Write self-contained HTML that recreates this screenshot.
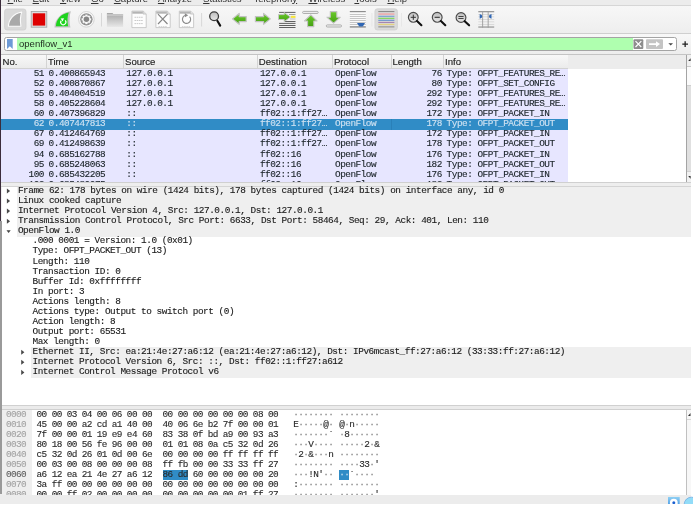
<!DOCTYPE html>
<html><head><meta charset="utf-8"><style>
*{margin:0;padding:0;box-sizing:border-box}
html,body{width:693px;height:506px;overflow:hidden;background:#efefef;position:relative}
body{-webkit-font-smoothing:antialiased}
.wrap{position:absolute;left:0;top:0;width:693px;height:506px;will-change:transform}
.a{position:absolute}
.m{font-family:"Liberation Mono", monospace;white-space:pre;color:#1a1a1a;-webkit-text-stroke:0.12px currentColor}
.s{font-family:"Liberation Sans", sans-serif;white-space:pre;color:#1a1a1a}
</style></head><body>
<div class="wrap"><div class="a" style="left:0;top:0;width:693px;height:5px;background:#ececec"></div><div class="a" style="left:0;top:0;width:693px;height:5px;overflow:hidden"><div class="a s" style="left:7.4px;top:-7.36px;font-size:9.6px;line-height:12px;color:#333"><span style="text-decoration:underline;text-decoration-thickness:1px;text-underline-offset:1.2px">F</span>ile</div><div class="a s" style="left:32.6px;top:-7.36px;font-size:9.6px;line-height:12px;color:#333"><span style="text-decoration:underline;text-decoration-thickness:1px;text-underline-offset:1.2px">E</span>dit</div><div class="a s" style="left:60.0px;top:-7.36px;font-size:9.6px;line-height:12px;color:#333"><span style="text-decoration:underline;text-decoration-thickness:1px;text-underline-offset:1.2px">V</span>iew</div><div class="a s" style="left:91.0px;top:-7.36px;font-size:9.6px;line-height:12px;color:#333"><span style="text-decoration:underline;text-decoration-thickness:1px;text-underline-offset:1.2px">G</span>o</div><div class="a s" style="left:113.9px;top:-7.36px;font-size:9.6px;line-height:12px;color:#333"><span style="text-decoration:underline;text-decoration-thickness:1px;text-underline-offset:1.2px">C</span>apture</div><div class="a s" style="left:157.9px;top:-7.36px;font-size:9.6px;line-height:12px;color:#333"><span style="text-decoration:underline;text-decoration-thickness:1px;text-underline-offset:1.2px">A</span>nalyze</div><div class="a s" style="left:203.1px;top:-7.36px;font-size:9.6px;line-height:12px;color:#333"><span style="text-decoration:underline;text-decoration-thickness:1px;text-underline-offset:1.2px">S</span>tatistics</div><div class="a s" style="left:253.4px;top:-7.36px;font-size:9.6px;line-height:12px;color:#333">Telephon<span style="text-decoration:underline;text-decoration-thickness:1px;text-underline-offset:1.2px">y</span></div><div class="a s" style="left:308.4px;top:-7.36px;font-size:9.6px;line-height:12px;color:#333"><span style="text-decoration:underline;text-decoration-thickness:1px;text-underline-offset:1.2px">W</span>ireless</div><div class="a s" style="left:354.4px;top:-7.36px;font-size:9.6px;line-height:12px;color:#333"><span style="text-decoration:underline;text-decoration-thickness:1px;text-underline-offset:1.2px">T</span>ools</div><div class="a s" style="left:387.4px;top:-7.36px;font-size:9.6px;line-height:12px;color:#333"><span style="text-decoration:underline;text-decoration-thickness:1px;text-underline-offset:1.2px">H</span>elp</div></div><div class="a" style="left:0;top:4.9px;width:693px;height:1px;background:#d6d6d6"></div><div class="a" style="left:0;top:6px;width:693px;height:27px;background:linear-gradient(#f7f7f7,#eeeeee)"></div><div class="a" style="left:0;top:33px;width:693px;height:1px;background:#cfcfcf"></div><svg class="a" style="left:0;top:0" width="693" height="34" viewBox="0 0 693 34">
<defs>
<linearGradient id="fold" x1="0" y1="0" x2="0" y2="1"><stop offset="0" stop-color="#a6a6a6"/><stop offset="1" stop-color="#e8e8e8"/></linearGradient>
<linearGradient id="grn" x1="0" y1="0" x2="0" y2="1"><stop offset="0" stop-color="#6ccb2c"/><stop offset="1" stop-color="#44a012"/></linearGradient>
<linearGradient id="mag" x1="0" y1="0" x2="0" y2="1"><stop offset="0" stop-color="#bdbdbd"/><stop offset="1" stop-color="#e8e8e8"/></linearGradient>
</defs>
<!-- start capture (pressed) -->
<rect x="4.6" y="9" width="21.4" height="21" rx="2.5" fill="#d9d9d9" stroke="#cecece" stroke-width="0.8"/>
<path d="M8.4 26.2 C8.7 19.5 13.5 13.2 21.7 12.1 C20.5 15.5 20.1 21 20.9 26.2 Z" fill="#a9a9a9" stroke="#fbfbfb" stroke-width="1.1" stroke-linejoin="round"/>
<!-- stop -->
<rect x="31.2" y="11.4" width="15.6" height="15.8" fill="#dedede" stroke="#a2a2a2" stroke-width="0.8"/>
<rect x="32.8" y="13.3" width="12.4" height="12.3" fill="#de0000"/>
<!-- restart -->
<path d="M54.5 27.4 C54.8 19.5 60.5 12.5 70.9 11.2 C69.3 15.5 69.1 22 70.4 27.4 Z" fill="#c2c2c2"/>
<path d="M55.9 26.2 C56.2 19.5 61 13.8 68.7 12.6 C67.4 16 67.1 21.5 68.1 26.2 Z" fill="#1ed41e"/>
<path d="M61.2 20.6 A2.6 2.6 0 1 0 65.2 20.4" fill="none" stroke="#fff" stroke-width="1.15"/>
<path d="M60.6 18.4 L64 18.2 L62.6 21.4 Z" fill="#fff"/>
<!-- options gear -->
<circle cx="86.4" cy="19.35" r="7.8" fill="#fafafa" stroke="#cfcfcf" stroke-width="0.9"/>
<circle cx="86.4" cy="19.35" r="6.2" fill="#8e8e8e"/>
<path d="M85.34 15.80 L85.46 14.69 L87.34 14.69 L87.46 15.80 L88.16 16.09 L89.02 15.39 L90.36 16.73 L89.66 17.59 L89.95 18.29 L91.06 18.41 L91.06 20.29 L89.95 20.41 L89.66 21.11 L90.36 21.97 L89.02 23.31 L88.16 22.61 L87.46 22.90 L87.34 24.01 L85.46 24.01 L85.34 22.90 L84.64 22.61 L83.78 23.31 L82.44 21.97 L83.14 21.11 L82.85 20.41 L81.74 20.29 L81.74 18.41 L82.85 18.29 L83.14 17.59 L82.44 16.73 L83.78 15.39 L84.64 16.09Z" fill="#f8f8f8" stroke="#f8f8f8" stroke-width="0.3" stroke-linejoin="round"/>
<circle cx="86.4" cy="19.35" r="2.75" fill="#868686"/>
<!-- separator -->
<rect x="101" y="13" width="0.9" height="13.5" fill="#d4d4d4"/>
<!-- open folder -->
<path d="M106.9 13 H112.5 L113.3 14.1 H123.1 V27.1 H106.9 Z" fill="url(#fold)"/>
<rect x="106.9" y="14.6" width="16.2" height="0.8" fill="#e6e6e6"/>
<!-- document -->
<path d="M131.9 11.1 H143.3 L146.20000000000002 14 V27.6 H131.9 Z" fill="#fdfdfd" stroke="#b8b8b8" stroke-width="0.7"/>
<rect x="132.3" y="11.5" width="10.5" height="2.2" fill="#b4b4b4"/>
<path d="M143.10000000000002 11.3 V14.1 H146.10000000000002" fill="#e0e0e0" stroke="#b0b0b0" stroke-width="0.6"/>
<rect x="134.5" y="16.8" width="1.6" height="0.9" fill="#c4c4c4"/><rect x="136.7" y="16.8" width="1.6" height="0.9" fill="#c4c4c4"/><rect x="138.9" y="16.8" width="1.6" height="0.9" fill="#c4c4c4"/><rect x="141.1" y="16.8" width="1.6" height="0.9" fill="#c4c4c4"/><rect x="134.5" y="20.0" width="1.6" height="0.9" fill="#c4c4c4"/><rect x="136.7" y="20.0" width="1.6" height="0.9" fill="#c4c4c4"/><rect x="138.9" y="20.0" width="1.6" height="0.9" fill="#c4c4c4"/><rect x="141.1" y="20.0" width="1.6" height="0.9" fill="#c4c4c4"/><rect x="134.5" y="23.2" width="1.6" height="0.9" fill="#c4c4c4"/><rect x="136.7" y="23.2" width="1.6" height="0.9" fill="#c4c4c4"/><rect x="138.9" y="23.2" width="1.6" height="0.9" fill="#c4c4c4"/><rect x="141.1" y="23.2" width="1.6" height="0.9" fill="#c4c4c4"/>
<!-- close file -->
<path d="M155.9 11.1 H167.3 L170.20000000000002 14 V27.6 H155.9 Z" fill="#fdfdfd" stroke="#b8b8b8" stroke-width="0.7"/>
<rect x="156.3" y="11.5" width="10.5" height="2.2" fill="#b4b4b4"/>
<path d="M167.10000000000002 11.3 V14.1 H170.10000000000002" fill="#e0e0e0" stroke="#b0b0b0" stroke-width="0.6"/>
<rect x="158.5" y="26.0" width="1.6" height="0.7" fill="#c8c8c8"/><rect x="160.7" y="26.0" width="1.6" height="0.7" fill="#c8c8c8"/><rect x="162.9" y="26.0" width="1.6" height="0.7" fill="#c8c8c8"/><rect x="165.1" y="26.0" width="1.6" height="0.7" fill="#c8c8c8"/><path d="M158 14.1 L167.5 24 M167.5 14.1 L158 24" stroke="#858585" stroke-width="1.15"/>
<!-- reload -->
<path d="M179.3 11.1 H190.70000000000002 L193.60000000000002 14 V27.6 H179.3 Z" fill="#fdfdfd" stroke="#b8b8b8" stroke-width="0.7"/>
<rect x="179.70000000000002" y="11.5" width="10.5" height="2.2" fill="#b4b4b4"/>
<path d="M190.50000000000003 11.3 V14.1 H193.50000000000003" fill="#e0e0e0" stroke="#b0b0b0" stroke-width="0.6"/>
<rect x="181.9" y="26" width="1.6" height="0.7" fill="#c8c8c8"/><rect x="184.1" y="26" width="1.6" height="0.7" fill="#c8c8c8"/><rect x="186.3" y="26" width="1.6" height="0.7" fill="#c8c8c8"/><rect x="188.5" y="26" width="1.6" height="0.7" fill="#c8c8c8"/><path d="M189.6 16.6 A4.1 4.1 0 1 1 185.8 15.3" fill="none" stroke="#8a8a8a" stroke-width="1.15"/><path d="M184.8 13.2 L188.2 15.3 L185 17.3 Z" fill="#8a8a8a"/>
<!-- separator -->
<rect x="201.2" y="13" width="0.9" height="13.5" fill="#d4d4d4"/>
<!-- find -->
<circle cx="214.1" cy="16.3" r="4.4" fill="url(#mag)" stroke="#3a3a3a" stroke-width="1.3"/>
<path d="M217.3 20.8 L220.2 25.6" stroke="#111" stroke-width="2.1" stroke-linecap="round"/>
<!-- back -->
<path d="M232.5 18.9 L239.2 13.5 V16.6 H246.2 V21.6 H239.2 V24.3 Z" fill="url(#grn)" stroke="#c2c2c2" stroke-width="1.2" stroke-linejoin="round"/>
<!-- forward -->
<path d="M270.3 18.9 L263.6 13.5 V16.6 H255.4 V21.6 H263.6 V24.3 Z" fill="url(#grn)" stroke="#c2c2c2" stroke-width="1.2" stroke-linejoin="round"/>
<!-- go to packet -->
<g fill="#505050">
<rect x="279.1" y="11.9" width="16.4" height="0.9"/>
<rect x="285" y="21" width="10.5" height="0.9"/>
<rect x="279.1" y="22.9" width="16.4" height="0.9"/>
<rect x="279.1" y="25" width="16.4" height="0.9"/>
<rect x="279.1" y="27.1" width="16.4" height="0.9"/>
</g>
<rect x="289" y="14" width="6.5" height="0.8" fill="#8a8a8a"/>
<rect x="290" y="18.6" width="5.5" height="0.8" fill="#b0b0b0"/>
<path d="M278.5 14.6 H284.2 V12.5 L290.4 17 L284.2 21.7 V19.5 H278.5 Z" fill="url(#grn)" stroke="#c4c4c4" stroke-width="1" stroke-linejoin="round"/>
<rect x="290.9" y="15.8" width="4.6" height="2.1" fill="#f6e43a"/>
<!-- first packet -->
<rect x="302.6" y="11.4" width="15.6" height="2.1" rx="1" fill="#ededed" stroke="#a0a0a0" stroke-width="0.8"/>
<path d="M310.8 14.8 L317 21 H313.8 V26.6 H307.6 V21 H304.5 Z" fill="url(#grn)" stroke="#c2c2c2" stroke-width="1.1" stroke-linejoin="round"/>
<!-- last packet -->
<path d="M330.3 11.6 H336.8 V17.2 H340.3 L333.55 23.2 L326.9 17.2 H330.3 Z" fill="url(#grn)" stroke="#c2c2c2" stroke-width="1.1" stroke-linejoin="round"/>
<rect x="326.3" y="24.9" width="15.2" height="2.1" rx="1" fill="#ededed" stroke="#a0a0a0" stroke-width="0.8"/>
<!-- autoscroll -->
<rect x="349.8" y="12" width="16" height="14.3" fill="#fafafa"/>
<rect x="349.8" y="11" width="16" height="1.2" fill="#8e8e8e"/>
<g fill="#c6c6c6"><rect x="349.8" y="14" width="16" height="1"/><rect x="349.8" y="16" width="16" height="1"/><rect x="349.8" y="18" width="16" height="1"/><rect x="349.8" y="20" width="16" height="1"/><rect x="349.8" y="22" width="16" height="1"/><rect x="349.8" y="24" width="16" height="1"/></g>
<rect x="349.8" y="26.2" width="16" height="1.4" fill="#8e8e8e"/>
<path d="M357 22.9 H365 L363 26.2 Q361 27 359 26.2 Z" fill="#2f66b4"/>
<rect x="371.6" y="13" width="0.7" height="13.5" fill="#e2e2e2"/>
<!-- colorize pressed -->
<rect x="374.9" y="8.8" width="22.5" height="21.2" rx="2.5" fill="#dadada" stroke="#cdcdcd" stroke-width="0.7"/>
<rect x="378.3" y="11" width="16.1" height="1.1" fill="#8c8c8c"/>
<rect x="378.3" y="13.4" width="16.1" height="1.3" fill="#f2a2a2"/>
<rect x="378.3" y="15.8" width="16.1" height="0.9" fill="#5f91d2"/>
<rect x="378.3" y="17.8" width="16.1" height="0.9" fill="#62d433"/>
<rect x="378.3" y="19.8" width="16.1" height="0.9" fill="#4d82c8"/>
<rect x="378.3" y="21.9" width="16.1" height="0.9" fill="#9a70a8"/>
<rect x="378.3" y="23.8" width="16.1" height="1.3" fill="#e2d083"/>
<rect x="378.3" y="26.2" width="16.1" height="1.3" fill="#9c9c9c"/>
<rect x="401" y="13" width="0.7" height="13.5" fill="#e2e2e2"/>
<!-- zoom in -->
<circle cx="413.3" cy="17.3" r="4.9" fill="url(#mag)" stroke="#4a4a4a" stroke-width="1.15"/>
<path d="M410.7 17.3 H415.9 M413.3 14.7 V19.9" stroke="#333" stroke-width="1"/>
<path d="M417 21 L421.4 25.2" stroke="#111" stroke-width="2.1" stroke-linecap="round"/>
<!-- zoom out -->
<circle cx="437.2" cy="17.3" r="4.9" fill="url(#mag)" stroke="#4a4a4a" stroke-width="1.15"/>
<path d="M434.6 17.3 H439.8" stroke="#333" stroke-width="1.1"/>
<path d="M440.9 21 L445.3 25.2" stroke="#111" stroke-width="2.1" stroke-linecap="round"/>
<!-- normal size -->
<circle cx="461" cy="17.5" r="4.9" fill="url(#mag)" stroke="#4a4a4a" stroke-width="1.15"/>
<path d="M458.4 16.5 H463.6 M458.4 18.5 H463.6" stroke="#333" stroke-width="0.9"/>
<path d="M464.7 21.2 L469.1 25.3" stroke="#111" stroke-width="2.1" stroke-linecap="round"/>
<!-- resize columns -->
<rect x="478.3" y="11" width="15.9" height="1.3" fill="#9a9a9a"/>
<g fill="#d0d0d0"><rect x="478.3" y="14" width="15.9" height="0.7"/><rect x="478.3" y="16.5" width="15.9" height="0.7"/><rect x="478.3" y="19" width="15.9" height="0.7"/><rect x="478.3" y="21.5" width="15.9" height="0.7"/><rect x="478.3" y="24" width="15.9" height="0.7"/></g>
<rect x="478.3" y="26.4" width="15.9" height="1.3" fill="#9a9a9a"/>
<rect x="482.2" y="11" width="0.9" height="16.7" fill="#9c9c9c"/>
<rect x="487.7" y="11" width="0.9" height="16.7" fill="#9c9c9c"/>
<path d="M479.7 14.1 Q482.6 15 482.2 16.4 Q482.6 17.8 479.7 18.7 Z" fill="#2f66b4"/>
<path d="M491.5 14.1 Q488.6 15 489 16.4 Q488.6 17.8 491.5 18.7 Z" fill="#2f66b4"/>
</svg>
<div class="a" style="left:0;top:34px;width:693px;height:20px;background:linear-gradient(#f8f8f8,#ededed)"></div><div class="a" style="left:4px;top:37px;width:673px;height:14px;border:1px solid #a4a4a4;border-radius:2.5px;background:#fff"></div><div class="a" style="left:17.3px;top:38px;width:616px;height:12px;background:#afffaf"></div><svg class="a" style="left:0;top:34px" width="693" height="20" viewBox="0 34 693 20"><path d="M7 39 H12.7 V49 L9.85 46.2 L7 49 Z" fill="#6d9ad6"/><rect x="633.5" y="39.2" width="9.8" height="9.8" rx="1" fill="#8d8d8d"/><path d="M635.5 41.2 L641.3 47 M641.3 41.2 L635.5 47" stroke="#fff" stroke-width="1.2"/><rect x="646" y="39.2" width="17" height="9.8" rx="1" fill="#c4c4c4"/><path d="M649 43.2 H656 V41.2 L660 44.1 L656 47 V45 H649 Z" fill="#fff"/><path d="M668.4 43.2 H673 L670.7 45.6 Z" fill="#444"/><path d="M682.3 44.1 H688 M685.15 41.3 V46.9" stroke="#222" stroke-width="1.3"/></svg><div class="a s" style="left:19px;top:38px;font-size:9.54px;line-height:12px;color:#1e2a1e">openflow_v1</div><div class="a" style="left:1px;top:54px;width:686px;height:128.5px;background:#fff"></div><div class="a" style="left:1px;top:54.2px;width:686px;height:14.5px;background:#ececec;border-top:1px solid #c4c4c4"></div><div class="a" style="left:1px;top:55.2px;width:567.2px;height:13.5px;background:linear-gradient(#f8f8f8,#ebebeb);border-bottom:1px solid #d2d2d2"></div><div class="a s" style="left:2.5px;top:55.6px;font-size:9.6px;line-height:11px;color:#222;-webkit-text-stroke:0.15px #222">No.</div><div class="a s" style="left:47.9px;top:55.6px;font-size:9.6px;line-height:11px;color:#222;-webkit-text-stroke:0.15px #222">Time</div><div class="a" style="left:45.9px;top:55px;width:1px;height:13px;background:#d3d3d3"></div><div class="a s" style="left:125.0px;top:55.6px;font-size:9.6px;line-height:11px;color:#222;-webkit-text-stroke:0.15px #222">Source</div><div class="a" style="left:123.0px;top:55px;width:1px;height:13px;background:#d3d3d3"></div><div class="a s" style="left:258.8px;top:55.6px;font-size:9.6px;line-height:11px;color:#222;-webkit-text-stroke:0.15px #222">Destination</div><div class="a" style="left:256.8px;top:55px;width:1px;height:13px;background:#d3d3d3"></div><div class="a s" style="left:333.9px;top:55.6px;font-size:9.6px;line-height:11px;color:#222;-webkit-text-stroke:0.15px #222">Protocol</div><div class="a" style="left:331.9px;top:55px;width:1px;height:13px;background:#d3d3d3"></div><div class="a s" style="left:392.5px;top:55.6px;font-size:9.6px;line-height:11px;color:#222;-webkit-text-stroke:0.15px #222">Length</div><div class="a" style="left:390.5px;top:55px;width:1px;height:13px;background:#d3d3d3"></div><div class="a s" style="left:445.0px;top:55.6px;font-size:9.6px;line-height:11px;color:#222;-webkit-text-stroke:0.15px #222">Info</div><div class="a" style="left:443.0px;top:55px;width:1px;height:13px;background:#d3d3d3"></div><div class="a" style="left:1px;top:69px;width:686px;height:113.3px;overflow:hidden"><div class="a" style="left:0;top:0;width:567.2px;height:120px;background:#e7e6ff"></div><div class="a m" style="left:-57.08px;width:100px;text-align:right;top:0.20px;font-size:9.4px;letter-spacing:-0.481px;line-height:10.04px;color:#1a2328">51</div><div class="a m" style="left:47.6px;top:0.20px;font-size:9.4px;letter-spacing:-0.481px;line-height:10.04px;color:#1a2328">0.400865943</div><div class="a m" style="left:125.3px;top:0.20px;font-size:9.4px;letter-spacing:-0.481px;line-height:10.04px;color:#1a2328">127.0.0.1</div><div class="a m" style="left:258.9px;top:0.20px;font-size:9.4px;letter-spacing:-0.481px;line-height:10.04px;color:#1a2328">127.0.0.1</div><div class="a m" style="left:334px;top:0.20px;font-size:9.4px;letter-spacing:-0.481px;line-height:10.04px;color:#1a2328">OpenFlow</div><div class="a m" style="left:340.92px;width:100px;text-align:right;top:0.20px;font-size:9.4px;letter-spacing:-0.481px;line-height:10.04px;color:#1a2328">76</div><div class="a m" style="left:445.6px;top:0.20px;font-size:9.4px;letter-spacing:-0.481px;line-height:10.04px;color:#1a2328">Type: OFPT_FEATURES_RE…</div><div class="a m" style="left:-57.08px;width:100px;text-align:right;top:10.24px;font-size:9.4px;letter-spacing:-0.481px;line-height:10.04px;color:#1a2328">52</div><div class="a m" style="left:47.6px;top:10.24px;font-size:9.4px;letter-spacing:-0.481px;line-height:10.04px;color:#1a2328">0.400870867</div><div class="a m" style="left:125.3px;top:10.24px;font-size:9.4px;letter-spacing:-0.481px;line-height:10.04px;color:#1a2328">127.0.0.1</div><div class="a m" style="left:258.9px;top:10.24px;font-size:9.4px;letter-spacing:-0.481px;line-height:10.04px;color:#1a2328">127.0.0.1</div><div class="a m" style="left:334px;top:10.24px;font-size:9.4px;letter-spacing:-0.481px;line-height:10.04px;color:#1a2328">OpenFlow</div><div class="a m" style="left:340.92px;width:100px;text-align:right;top:10.24px;font-size:9.4px;letter-spacing:-0.481px;line-height:10.04px;color:#1a2328">80</div><div class="a m" style="left:445.6px;top:10.24px;font-size:9.4px;letter-spacing:-0.481px;line-height:10.04px;color:#1a2328">Type: OFPT_SET_CONFIG</div><div class="a m" style="left:-57.08px;width:100px;text-align:right;top:20.28px;font-size:9.4px;letter-spacing:-0.481px;line-height:10.04px;color:#1a2328">55</div><div class="a m" style="left:47.6px;top:20.28px;font-size:9.4px;letter-spacing:-0.481px;line-height:10.04px;color:#1a2328">0.404004519</div><div class="a m" style="left:125.3px;top:20.28px;font-size:9.4px;letter-spacing:-0.481px;line-height:10.04px;color:#1a2328">127.0.0.1</div><div class="a m" style="left:258.9px;top:20.28px;font-size:9.4px;letter-spacing:-0.481px;line-height:10.04px;color:#1a2328">127.0.0.1</div><div class="a m" style="left:334px;top:20.28px;font-size:9.4px;letter-spacing:-0.481px;line-height:10.04px;color:#1a2328">OpenFlow</div><div class="a m" style="left:340.92px;width:100px;text-align:right;top:20.28px;font-size:9.4px;letter-spacing:-0.481px;line-height:10.04px;color:#1a2328">292</div><div class="a m" style="left:445.6px;top:20.28px;font-size:9.4px;letter-spacing:-0.481px;line-height:10.04px;color:#1a2328">Type: OFPT_FEATURES_RE…</div><div class="a m" style="left:-57.08px;width:100px;text-align:right;top:30.32px;font-size:9.4px;letter-spacing:-0.481px;line-height:10.04px;color:#1a2328">58</div><div class="a m" style="left:47.6px;top:30.32px;font-size:9.4px;letter-spacing:-0.481px;line-height:10.04px;color:#1a2328">0.405228604</div><div class="a m" style="left:125.3px;top:30.32px;font-size:9.4px;letter-spacing:-0.481px;line-height:10.04px;color:#1a2328">127.0.0.1</div><div class="a m" style="left:258.9px;top:30.32px;font-size:9.4px;letter-spacing:-0.481px;line-height:10.04px;color:#1a2328">127.0.0.1</div><div class="a m" style="left:334px;top:30.32px;font-size:9.4px;letter-spacing:-0.481px;line-height:10.04px;color:#1a2328">OpenFlow</div><div class="a m" style="left:340.92px;width:100px;text-align:right;top:30.32px;font-size:9.4px;letter-spacing:-0.481px;line-height:10.04px;color:#1a2328">292</div><div class="a m" style="left:445.6px;top:30.32px;font-size:9.4px;letter-spacing:-0.481px;line-height:10.04px;color:#1a2328">Type: OFPT_FEATURES_RE…</div><div class="a m" style="left:-57.08px;width:100px;text-align:right;top:40.36px;font-size:9.4px;letter-spacing:-0.481px;line-height:10.04px;color:#1a2328">60</div><div class="a m" style="left:47.6px;top:40.36px;font-size:9.4px;letter-spacing:-0.481px;line-height:10.04px;color:#1a2328">0.407396829</div><div class="a m" style="left:125.3px;top:40.36px;font-size:9.4px;letter-spacing:-0.481px;line-height:10.04px;color:#1a2328">::</div><div class="a m" style="left:258.9px;top:40.36px;font-size:9.4px;letter-spacing:-0.481px;line-height:10.04px;color:#1a2328">ff02::1:ff27…</div><div class="a m" style="left:334px;top:40.36px;font-size:9.4px;letter-spacing:-0.481px;line-height:10.04px;color:#1a2328">OpenFlow</div><div class="a m" style="left:340.92px;width:100px;text-align:right;top:40.36px;font-size:9.4px;letter-spacing:-0.481px;line-height:10.04px;color:#1a2328">172</div><div class="a m" style="left:445.6px;top:40.36px;font-size:9.4px;letter-spacing:-0.481px;line-height:10.04px;color:#1a2328">Type: OFPT_PACKET_IN</div><div class="a" style="left:0;top:50.30px;width:567.2px;height:10.4px;background:#308cc6"></div><div class="a" style="left:389.5px;top:50.30px;width:0.8px;height:10.4px;background:#2a80b8"></div><div class="a m" style="left:-57.08px;width:100px;text-align:right;top:50.40px;font-size:9.4px;letter-spacing:-0.481px;line-height:10.04px;color:#cfe2f2">62</div><div class="a m" style="left:47.6px;top:50.40px;font-size:9.4px;letter-spacing:-0.481px;line-height:10.04px;color:#cfe2f2">0.407447813</div><div class="a m" style="left:125.3px;top:50.40px;font-size:9.4px;letter-spacing:-0.481px;line-height:10.04px;color:#cfe2f2">::</div><div class="a m" style="left:258.9px;top:50.40px;font-size:9.4px;letter-spacing:-0.481px;line-height:10.04px;color:#cfe2f2">ff02::1:ff27…</div><div class="a m" style="left:334px;top:50.40px;font-size:9.4px;letter-spacing:-0.481px;line-height:10.04px;color:#cfe2f2">OpenFlow</div><div class="a m" style="left:340.92px;width:100px;text-align:right;top:50.40px;font-size:9.4px;letter-spacing:-0.481px;line-height:10.04px;color:#cfe2f2">178</div><div class="a m" style="left:445.6px;top:50.40px;font-size:9.4px;letter-spacing:-0.481px;line-height:10.04px;color:#cfe2f2">Type: OFPT_PACKET_OUT</div><div class="a m" style="left:-57.08px;width:100px;text-align:right;top:60.44px;font-size:9.4px;letter-spacing:-0.481px;line-height:10.04px;color:#1a2328">67</div><div class="a m" style="left:47.6px;top:60.44px;font-size:9.4px;letter-spacing:-0.481px;line-height:10.04px;color:#1a2328">0.412464769</div><div class="a m" style="left:125.3px;top:60.44px;font-size:9.4px;letter-spacing:-0.481px;line-height:10.04px;color:#1a2328">::</div><div class="a m" style="left:258.9px;top:60.44px;font-size:9.4px;letter-spacing:-0.481px;line-height:10.04px;color:#1a2328">ff02::1:ff27…</div><div class="a m" style="left:334px;top:60.44px;font-size:9.4px;letter-spacing:-0.481px;line-height:10.04px;color:#1a2328">OpenFlow</div><div class="a m" style="left:340.92px;width:100px;text-align:right;top:60.44px;font-size:9.4px;letter-spacing:-0.481px;line-height:10.04px;color:#1a2328">172</div><div class="a m" style="left:445.6px;top:60.44px;font-size:9.4px;letter-spacing:-0.481px;line-height:10.04px;color:#1a2328">Type: OFPT_PACKET_IN</div><div class="a m" style="left:-57.08px;width:100px;text-align:right;top:70.48px;font-size:9.4px;letter-spacing:-0.481px;line-height:10.04px;color:#1a2328">69</div><div class="a m" style="left:47.6px;top:70.48px;font-size:9.4px;letter-spacing:-0.481px;line-height:10.04px;color:#1a2328">0.412498639</div><div class="a m" style="left:125.3px;top:70.48px;font-size:9.4px;letter-spacing:-0.481px;line-height:10.04px;color:#1a2328">::</div><div class="a m" style="left:258.9px;top:70.48px;font-size:9.4px;letter-spacing:-0.481px;line-height:10.04px;color:#1a2328">ff02::1:ff27…</div><div class="a m" style="left:334px;top:70.48px;font-size:9.4px;letter-spacing:-0.481px;line-height:10.04px;color:#1a2328">OpenFlow</div><div class="a m" style="left:340.92px;width:100px;text-align:right;top:70.48px;font-size:9.4px;letter-spacing:-0.481px;line-height:10.04px;color:#1a2328">178</div><div class="a m" style="left:445.6px;top:70.48px;font-size:9.4px;letter-spacing:-0.481px;line-height:10.04px;color:#1a2328">Type: OFPT_PACKET_OUT</div><div class="a m" style="left:-57.08px;width:100px;text-align:right;top:80.52px;font-size:9.4px;letter-spacing:-0.481px;line-height:10.04px;color:#1a2328">94</div><div class="a m" style="left:47.6px;top:80.52px;font-size:9.4px;letter-spacing:-0.481px;line-height:10.04px;color:#1a2328">0.685162788</div><div class="a m" style="left:125.3px;top:80.52px;font-size:9.4px;letter-spacing:-0.481px;line-height:10.04px;color:#1a2328">::</div><div class="a m" style="left:258.9px;top:80.52px;font-size:9.4px;letter-spacing:-0.481px;line-height:10.04px;color:#1a2328">ff02::16</div><div class="a m" style="left:334px;top:80.52px;font-size:9.4px;letter-spacing:-0.481px;line-height:10.04px;color:#1a2328">OpenFlow</div><div class="a m" style="left:340.92px;width:100px;text-align:right;top:80.52px;font-size:9.4px;letter-spacing:-0.481px;line-height:10.04px;color:#1a2328">176</div><div class="a m" style="left:445.6px;top:80.52px;font-size:9.4px;letter-spacing:-0.481px;line-height:10.04px;color:#1a2328">Type: OFPT_PACKET_IN</div><div class="a m" style="left:-57.08px;width:100px;text-align:right;top:90.56px;font-size:9.4px;letter-spacing:-0.481px;line-height:10.04px;color:#1a2328">95</div><div class="a m" style="left:47.6px;top:90.56px;font-size:9.4px;letter-spacing:-0.481px;line-height:10.04px;color:#1a2328">0.685248063</div><div class="a m" style="left:125.3px;top:90.56px;font-size:9.4px;letter-spacing:-0.481px;line-height:10.04px;color:#1a2328">::</div><div class="a m" style="left:258.9px;top:90.56px;font-size:9.4px;letter-spacing:-0.481px;line-height:10.04px;color:#1a2328">ff02::16</div><div class="a m" style="left:334px;top:90.56px;font-size:9.4px;letter-spacing:-0.481px;line-height:10.04px;color:#1a2328">OpenFlow</div><div class="a m" style="left:340.92px;width:100px;text-align:right;top:90.56px;font-size:9.4px;letter-spacing:-0.481px;line-height:10.04px;color:#1a2328">182</div><div class="a m" style="left:445.6px;top:90.56px;font-size:9.4px;letter-spacing:-0.481px;line-height:10.04px;color:#1a2328">Type: OFPT_PACKET_OUT</div><div class="a m" style="left:-57.08px;width:100px;text-align:right;top:100.60px;font-size:9.4px;letter-spacing:-0.481px;line-height:10.04px;color:#1a2328">100</div><div class="a m" style="left:47.6px;top:100.60px;font-size:9.4px;letter-spacing:-0.481px;line-height:10.04px;color:#1a2328">0.685432205</div><div class="a m" style="left:125.3px;top:100.60px;font-size:9.4px;letter-spacing:-0.481px;line-height:10.04px;color:#1a2328">::</div><div class="a m" style="left:258.9px;top:100.60px;font-size:9.4px;letter-spacing:-0.481px;line-height:10.04px;color:#1a2328">ff02::16</div><div class="a m" style="left:334px;top:100.60px;font-size:9.4px;letter-spacing:-0.481px;line-height:10.04px;color:#1a2328">OpenFlow</div><div class="a m" style="left:340.92px;width:100px;text-align:right;top:100.60px;font-size:9.4px;letter-spacing:-0.481px;line-height:10.04px;color:#1a2328">176</div><div class="a m" style="left:445.6px;top:100.60px;font-size:9.4px;letter-spacing:-0.481px;line-height:10.04px;color:#1a2328">Type: OFPT_PACKET_IN</div><div class="a m" style="left:-57.08px;width:100px;text-align:right;top:110.64px;font-size:9.4px;letter-spacing:-0.481px;line-height:10.04px;color:#1a2328">102</div><div class="a m" style="left:47.6px;top:110.64px;font-size:9.4px;letter-spacing:-0.481px;line-height:10.04px;color:#1a2328">0.685480075</div><div class="a m" style="left:125.3px;top:110.64px;font-size:9.4px;letter-spacing:-0.481px;line-height:10.04px;color:#1a2328">::</div><div class="a m" style="left:258.9px;top:110.64px;font-size:9.4px;letter-spacing:-0.481px;line-height:10.04px;color:#1a2328">ff02::16</div><div class="a m" style="left:334px;top:110.64px;font-size:9.4px;letter-spacing:-0.481px;line-height:10.04px;color:#1a2328">OpenFlow</div><div class="a m" style="left:340.92px;width:100px;text-align:right;top:110.64px;font-size:9.4px;letter-spacing:-0.481px;line-height:10.04px;color:#1a2328">182</div><div class="a m" style="left:445.6px;top:110.64px;font-size:9.4px;letter-spacing:-0.481px;line-height:10.04px;color:#1a2328">Type: OFPT_PACKET_OUT</div></div><div class="a" style="left:686px;top:55px;width:1px;height:127px;background:#a4a4a4"></div><div class="a" style="left:687px;top:55px;width:4px;height:10.5px;background:#f0f0f0"></div><div class="a" style="left:687px;top:65.5px;width:4px;height:20px;background:#fbfbfb;border-top:1px solid #c8c8c8;border-bottom:1px solid #cfcfcf"></div><div class="a" style="left:687px;top:85.5px;width:4px;height:85.5px;background:#e0e0e0"></div><div class="a" style="left:687px;top:171px;width:4px;height:11px;background:#f2f2f2;border-top:1px solid #d0d0d0"></div><svg class="a" style="left:686px;top:54px" width="7" height="130" viewBox="686 54 7 130"><path d="M688.2 61 L690.6 58.2 V61Z" fill="#333"/><path d="M688.2 176 L690.6 176 V178.8Z" fill="#333"/></svg><div class="a" style="left:691px;top:0;width:2px;height:506px;background:#fff"></div><div class="a" style="left:686px;top:54.2px;width:5px;height:1px;background:#c4c4c4"></div><div class="a" style="left:0;top:0;width:1.2px;height:220.5px;background:#3b2c3b"></div><div class="a" style="left:0;top:220.5px;width:1.5px;height:273.5px;background:#9a9a9a"></div><div class="a" style="left:1px;top:182px;width:690px;height:1px;background:#d0d0d0"></div><div class="a" style="left:1px;top:183px;width:690px;height:2.5px;background:#eeeeee"></div><div class="a" style="left:1px;top:185.5px;width:690px;height:1px;background:#d4d4d4"></div><div class="a" style="left:1.5px;top:186.5px;width:689.5px;height:218.5px;background:#fff"></div><div class="a" style="left:16.6px;top:186.5px;width:674.4px;height:50.4px;background:#efefef"></div><div class="a" style="left:30.8px;top:347.28px;width:660.2px;height:30.240000000000002px;background:#efefef"></div><div class="a m" style="left:17.9px;top:186.00px;font-size:9.4px;letter-spacing:-0.456px;line-height:10.08px;color:#1a1a1a">Frame 62: 178 bytes on wire (1424 bits), 178 bytes captured (1424 bits) on interface any, id 0</div><div class="a m" style="left:17.9px;top:196.08px;font-size:9.4px;letter-spacing:-0.456px;line-height:10.08px;color:#1a1a1a">Linux cooked capture</div><div class="a m" style="left:17.9px;top:206.16px;font-size:9.4px;letter-spacing:-0.456px;line-height:10.08px;color:#1a1a1a">Internet Protocol Version 4, Src: 127.0.0.1, Dst: 127.0.0.1</div><div class="a m" style="left:17.9px;top:216.24px;font-size:9.4px;letter-spacing:-0.456px;line-height:10.08px;color:#1a1a1a">Transmission Control Protocol, Src Port: 6633, Dst Port: 58464, Seq: 29, Ack: 401, Len: 110</div><div class="a m" style="left:17.9px;top:226.32px;font-size:9.4px;letter-spacing:-0.456px;line-height:10.08px;color:#1a1a1a">OpenFlow 1.0</div><div class="a m" style="left:32.5px;top:236.40px;font-size:9.4px;letter-spacing:-0.456px;line-height:10.08px;color:#1a1a1a">.000 0001 = Version: 1.0 (0x01)</div><div class="a m" style="left:32.5px;top:246.48px;font-size:9.4px;letter-spacing:-0.456px;line-height:10.08px;color:#1a1a1a">Type: OFPT_PACKET_OUT (13)</div><div class="a m" style="left:32.5px;top:256.56px;font-size:9.4px;letter-spacing:-0.456px;line-height:10.08px;color:#1a1a1a">Length: 110</div><div class="a m" style="left:32.5px;top:266.64px;font-size:9.4px;letter-spacing:-0.456px;line-height:10.08px;color:#1a1a1a">Transaction ID: 0</div><div class="a m" style="left:32.5px;top:276.72px;font-size:9.4px;letter-spacing:-0.456px;line-height:10.08px;color:#1a1a1a">Buffer Id: 0xffffffff</div><div class="a m" style="left:32.5px;top:286.80px;font-size:9.4px;letter-spacing:-0.456px;line-height:10.08px;color:#1a1a1a">In port: 3</div><div class="a m" style="left:32.5px;top:296.88px;font-size:9.4px;letter-spacing:-0.456px;line-height:10.08px;color:#1a1a1a">Actions length: 8</div><div class="a m" style="left:32.5px;top:306.96px;font-size:9.4px;letter-spacing:-0.456px;line-height:10.08px;color:#1a1a1a">Actions type: Output to switch port (0)</div><div class="a m" style="left:32.5px;top:317.04px;font-size:9.4px;letter-spacing:-0.456px;line-height:10.08px;color:#1a1a1a">Action length: 8</div><div class="a m" style="left:32.5px;top:327.12px;font-size:9.4px;letter-spacing:-0.456px;line-height:10.08px;color:#1a1a1a">Output port: 65531</div><div class="a m" style="left:32.5px;top:337.20px;font-size:9.4px;letter-spacing:-0.456px;line-height:10.08px;color:#1a1a1a">Max length: 0</div><div class="a m" style="left:32.5px;top:347.28px;font-size:9.4px;letter-spacing:-0.456px;line-height:10.08px;color:#1a1a1a">Ethernet II, Src: ea:21:4e:27:a6:12 (ea:21:4e:27:a6:12), Dst: IPv6mcast_ff:27:a6:12 (33:33:ff:27:a6:12)</div><div class="a m" style="left:32.5px;top:357.36px;font-size:9.4px;letter-spacing:-0.456px;line-height:10.08px;color:#1a1a1a">Internet Protocol Version 6, Src: ::, Dst: ff02::1:ff27:a612</div><div class="a m" style="left:32.5px;top:367.44px;font-size:9.4px;letter-spacing:-0.456px;line-height:10.08px;color:#1a1a1a">Internet Control Message Protocol v6</div><svg class="a" style="left:0;top:0" width="693" height="506" viewBox="0 0 693 506"><path d="M6.8999999999999995 188.40 L10.1 190.95 L6.8999999999999995 193.50Z" fill="#4a4a4a"/><path d="M6.8999999999999995 198.48 L10.1 201.03 L6.8999999999999995 203.58Z" fill="#4a4a4a"/><path d="M6.8999999999999995 208.56 L10.1 211.11 L6.8999999999999995 213.66Z" fill="#4a4a4a"/><path d="M6.8999999999999995 218.64 L10.1 221.19 L6.8999999999999995 223.74Z" fill="#4a4a4a"/><path d="M6.5 230.22 H10.7 L8.6 233.02Z" fill="#444"/><path d="M21.2 349.68 L24.4 352.23 L21.2 354.78Z" fill="#4a4a4a"/><path d="M21.2 359.76 L24.4 362.31 L21.2 364.86Z" fill="#4a4a4a"/><path d="M21.2 369.84 L24.4 372.39 L21.2 374.94Z" fill="#4a4a4a"/></svg><div class="a" style="left:1.5px;top:405px;width:689.5px;height:1px;background:#d0d0d0"></div><div class="a" style="left:1.5px;top:406px;width:689.5px;height:3px;background:#ebebeb"></div><div class="a" style="left:1.5px;top:409px;width:689.5px;height:0.8px;background:#d0d0d0"></div><div class="a" style="left:1.5px;top:409.5px;width:685px;height:85.4px;background:#fff"></div><div class="a" style="left:1.5px;top:409.5px;width:30px;height:85.4px;background:#efefef"></div><div class="a" style="left:686px;top:409.5px;width:1px;height:85.4px;background:#c0c0c0"></div><div class="a" style="left:687px;top:409.8px;width:4px;height:85.1px;background:#f7f7f7"></div><svg class="a" style="left:686px;top:405px" width="7" height="20" viewBox="686 405 7 20"><path d="M688 416 L690.5 413 V416Z" fill="#333"/><rect x="687" y="419" width="4" height="0.8" fill="#cfcfcf"/></svg><div class="a" style="left:1.5px;top:409.5px;width:685px;height:85.4px;overflow:hidden"><div class="a m" style="left:4.5px;top:0.30px;font-size:9.4px;letter-spacing:-0.6109399999999994px;line-height:10.08px;color:#a4a4a4">0000</div><div class="a m" style="left:35.1px;top:0.30px;font-size:9.4px;letter-spacing:-0.6109399999999994px;line-height:10.08px;color:#2a2a2a">00 00 03 04 00 06 00 00</div><div class="a m" style="left:161.1px;top:0.30px;font-size:9.4px;letter-spacing:-0.6109399999999994px;line-height:10.08px;color:#2a2a2a">00 00 00 00 00 00 08 00</div><div class="a m" style="left:291.7px;top:0.30px;font-size:9.4px;letter-spacing:-0.6109399999999994px;line-height:10.08px;color:#2a2a2a"><span style="color:#7a7a7a">·</span><span style="color:#7a7a7a">·</span><span style="color:#7a7a7a">·</span><span style="color:#7a7a7a">·</span><span style="color:#7a7a7a">·</span><span style="color:#7a7a7a">·</span><span style="color:#7a7a7a">·</span><span style="color:#7a7a7a">·</span></div><div class="a m" style="left:337.7px;top:0.30px;font-size:9.4px;letter-spacing:-0.6109399999999994px;line-height:10.08px;color:#2a2a2a"><span style="color:#7a7a7a">·</span><span style="color:#7a7a7a">·</span><span style="color:#7a7a7a">·</span><span style="color:#7a7a7a">·</span><span style="color:#7a7a7a">·</span><span style="color:#7a7a7a">·</span><span style="color:#7a7a7a">·</span><span style="color:#7a7a7a">·</span></div><div class="a m" style="left:4.5px;top:10.38px;font-size:9.4px;letter-spacing:-0.6109399999999994px;line-height:10.08px;color:#a4a4a4">0010</div><div class="a m" style="left:35.1px;top:10.38px;font-size:9.4px;letter-spacing:-0.6109399999999994px;line-height:10.08px;color:#2a2a2a">45 00 00 a2 cd a1 40 00</div><div class="a m" style="left:161.1px;top:10.38px;font-size:9.4px;letter-spacing:-0.6109399999999994px;line-height:10.08px;color:#2a2a2a">40 06 6e b2 7f 00 00 01</div><div class="a m" style="left:291.7px;top:10.38px;font-size:9.4px;letter-spacing:-0.6109399999999994px;line-height:10.08px;color:#2a2a2a">E<span style="color:#7a7a7a">·</span><span style="color:#7a7a7a">·</span><span style="color:#7a7a7a">·</span><span style="color:#7a7a7a">·</span><span style="color:#7a7a7a">·</span>@<span style="color:#7a7a7a">·</span></div><div class="a m" style="left:337.7px;top:10.38px;font-size:9.4px;letter-spacing:-0.6109399999999994px;line-height:10.08px;color:#2a2a2a">@<span style="color:#7a7a7a">·</span>n<span style="color:#7a7a7a">·</span><span style="color:#7a7a7a">·</span><span style="color:#7a7a7a">·</span><span style="color:#7a7a7a">·</span><span style="color:#7a7a7a">·</span></div><div class="a m" style="left:4.5px;top:20.46px;font-size:9.4px;letter-spacing:-0.6109399999999994px;line-height:10.08px;color:#a4a4a4">0020</div><div class="a m" style="left:35.1px;top:20.46px;font-size:9.4px;letter-spacing:-0.6109399999999994px;line-height:10.08px;color:#2a2a2a">7f 00 00 01 19 e9 e4 60</div><div class="a m" style="left:161.1px;top:20.46px;font-size:9.4px;letter-spacing:-0.6109399999999994px;line-height:10.08px;color:#2a2a2a">83 38 0f bd a9 00 93 a3</div><div class="a m" style="left:291.7px;top:20.46px;font-size:9.4px;letter-spacing:-0.6109399999999994px;line-height:10.08px;color:#2a2a2a"><span style="color:#7a7a7a">·</span><span style="color:#7a7a7a">·</span><span style="color:#7a7a7a">·</span><span style="color:#7a7a7a">·</span><span style="color:#7a7a7a">·</span><span style="color:#7a7a7a">·</span><span style="color:#7a7a7a">·</span>`</div><div class="a m" style="left:337.7px;top:20.46px;font-size:9.4px;letter-spacing:-0.6109399999999994px;line-height:10.08px;color:#2a2a2a"><span style="color:#7a7a7a">·</span>8<span style="color:#7a7a7a">·</span><span style="color:#7a7a7a">·</span><span style="color:#7a7a7a">·</span><span style="color:#7a7a7a">·</span><span style="color:#7a7a7a">·</span><span style="color:#7a7a7a">·</span></div><div class="a m" style="left:4.5px;top:30.54px;font-size:9.4px;letter-spacing:-0.6109399999999994px;line-height:10.08px;color:#a4a4a4">0030</div><div class="a m" style="left:35.1px;top:30.54px;font-size:9.4px;letter-spacing:-0.6109399999999994px;line-height:10.08px;color:#2a2a2a">80 18 00 56 fe 96 00 00</div><div class="a m" style="left:161.1px;top:30.54px;font-size:9.4px;letter-spacing:-0.6109399999999994px;line-height:10.08px;color:#2a2a2a">01 01 08 0a c5 32 0d 26</div><div class="a m" style="left:291.7px;top:30.54px;font-size:9.4px;letter-spacing:-0.6109399999999994px;line-height:10.08px;color:#2a2a2a"><span style="color:#7a7a7a">·</span><span style="color:#7a7a7a">·</span><span style="color:#7a7a7a">·</span>V<span style="color:#7a7a7a">·</span><span style="color:#7a7a7a">·</span><span style="color:#7a7a7a">·</span><span style="color:#7a7a7a">·</span></div><div class="a m" style="left:337.7px;top:30.54px;font-size:9.4px;letter-spacing:-0.6109399999999994px;line-height:10.08px;color:#2a2a2a"><span style="color:#7a7a7a">·</span><span style="color:#7a7a7a">·</span><span style="color:#7a7a7a">·</span><span style="color:#7a7a7a">·</span><span style="color:#7a7a7a">·</span>2<span style="color:#7a7a7a">·</span>&amp;</div><div class="a m" style="left:4.5px;top:40.62px;font-size:9.4px;letter-spacing:-0.6109399999999994px;line-height:10.08px;color:#a4a4a4">0040</div><div class="a m" style="left:35.1px;top:40.62px;font-size:9.4px;letter-spacing:-0.6109399999999994px;line-height:10.08px;color:#2a2a2a">c5 32 0d 26 01 0d 00 6e</div><div class="a m" style="left:161.1px;top:40.62px;font-size:9.4px;letter-spacing:-0.6109399999999994px;line-height:10.08px;color:#2a2a2a">00 00 00 00 ff ff ff ff</div><div class="a m" style="left:291.7px;top:40.62px;font-size:9.4px;letter-spacing:-0.6109399999999994px;line-height:10.08px;color:#2a2a2a"><span style="color:#7a7a7a">·</span>2<span style="color:#7a7a7a">·</span>&amp;<span style="color:#7a7a7a">·</span><span style="color:#7a7a7a">·</span><span style="color:#7a7a7a">·</span>n</div><div class="a m" style="left:337.7px;top:40.62px;font-size:9.4px;letter-spacing:-0.6109399999999994px;line-height:10.08px;color:#2a2a2a"><span style="color:#7a7a7a">·</span><span style="color:#7a7a7a">·</span><span style="color:#7a7a7a">·</span><span style="color:#7a7a7a">·</span><span style="color:#7a7a7a">·</span><span style="color:#7a7a7a">·</span><span style="color:#7a7a7a">·</span><span style="color:#7a7a7a">·</span></div><div class="a m" style="left:4.5px;top:50.70px;font-size:9.4px;letter-spacing:-0.6109399999999994px;line-height:10.08px;color:#a4a4a4">0050</div><div class="a m" style="left:35.1px;top:50.70px;font-size:9.4px;letter-spacing:-0.6109399999999994px;line-height:10.08px;color:#2a2a2a">00 03 00 08 00 00 00 08</div><div class="a m" style="left:161.1px;top:50.70px;font-size:9.4px;letter-spacing:-0.6109399999999994px;line-height:10.08px;color:#2a2a2a">ff fb 00 00 33 33 ff 27</div><div class="a m" style="left:291.7px;top:50.70px;font-size:9.4px;letter-spacing:-0.6109399999999994px;line-height:10.08px;color:#2a2a2a"><span style="color:#7a7a7a">·</span><span style="color:#7a7a7a">·</span><span style="color:#7a7a7a">·</span><span style="color:#7a7a7a">·</span><span style="color:#7a7a7a">·</span><span style="color:#7a7a7a">·</span><span style="color:#7a7a7a">·</span><span style="color:#7a7a7a">·</span></div><div class="a m" style="left:337.7px;top:50.70px;font-size:9.4px;letter-spacing:-0.6109399999999994px;line-height:10.08px;color:#2a2a2a"><span style="color:#7a7a7a">·</span><span style="color:#7a7a7a">·</span><span style="color:#7a7a7a">·</span><span style="color:#7a7a7a">·</span>33<span style="color:#7a7a7a">·</span>&#x27;</div><div class="a m" style="left:4.5px;top:60.78px;font-size:9.4px;letter-spacing:-0.6109399999999994px;line-height:10.08px;color:#606060">0060</div><div class="a" style="left:161.2px;top:60.98px;width:25.5px;height:9.7px;background:#308cc6"></div><div class="a" style="left:337.5px;top:60.98px;width:10px;height:9.7px;background:#308cc6"></div><div class="a m" style="left:35.1px;top:60.78px;font-size:9.4px;letter-spacing:-0.6109399999999994px;line-height:10.08px;color:#2a2a2a">a6 12 ea 21 4e 27 a6 12</div><div class="a m" style="left:161.1px;top:60.78px;font-size:9.4px;letter-spacing:-0.6109399999999994px;line-height:10.08px;color:#2a2a2a">86 dd 60 00 00 00 00 20</div><div class="a m" style="left:291.7px;top:60.78px;font-size:9.4px;letter-spacing:-0.6109399999999994px;line-height:10.08px;color:#2a2a2a"><span style="color:#7a7a7a">·</span><span style="color:#7a7a7a">·</span><span style="color:#7a7a7a">·</span>!N&#x27;<span style="color:#7a7a7a">·</span><span style="color:#7a7a7a">·</span></div><div class="a m" style="left:337.7px;top:60.78px;font-size:9.4px;letter-spacing:-0.6109399999999994px;line-height:10.08px;color:#2a2a2a"><span style="color:#cfe3f3">·</span><span style="color:#cfe3f3">·</span>`<span style="color:#7a7a7a">·</span><span style="color:#7a7a7a">·</span><span style="color:#7a7a7a">·</span><span style="color:#7a7a7a">·</span> </div><div class="a m" style="left:4.5px;top:70.86px;font-size:9.4px;letter-spacing:-0.6109399999999994px;line-height:10.08px;color:#a4a4a4">0070</div><div class="a m" style="left:35.1px;top:70.86px;font-size:9.4px;letter-spacing:-0.6109399999999994px;line-height:10.08px;color:#2a2a2a">3a ff 00 00 00 00 00 00</div><div class="a m" style="left:161.1px;top:70.86px;font-size:9.4px;letter-spacing:-0.6109399999999994px;line-height:10.08px;color:#2a2a2a">00 00 00 00 00 00 00 00</div><div class="a m" style="left:291.7px;top:70.86px;font-size:9.4px;letter-spacing:-0.6109399999999994px;line-height:10.08px;color:#2a2a2a">:<span style="color:#7a7a7a">·</span><span style="color:#7a7a7a">·</span><span style="color:#7a7a7a">·</span><span style="color:#7a7a7a">·</span><span style="color:#7a7a7a">·</span><span style="color:#7a7a7a">·</span><span style="color:#7a7a7a">·</span></div><div class="a m" style="left:337.7px;top:70.86px;font-size:9.4px;letter-spacing:-0.6109399999999994px;line-height:10.08px;color:#2a2a2a"><span style="color:#7a7a7a">·</span><span style="color:#7a7a7a">·</span><span style="color:#7a7a7a">·</span><span style="color:#7a7a7a">·</span><span style="color:#7a7a7a">·</span><span style="color:#7a7a7a">·</span><span style="color:#7a7a7a">·</span><span style="color:#7a7a7a">·</span></div><div class="a m" style="left:4.5px;top:80.94px;font-size:9.4px;letter-spacing:-0.6109399999999994px;line-height:10.08px;color:#a4a4a4">0080</div><div class="a m" style="left:35.1px;top:80.94px;font-size:9.4px;letter-spacing:-0.6109399999999994px;line-height:10.08px;color:#2a2a2a">00 00 ff 02 00 00 00 00</div><div class="a m" style="left:161.1px;top:80.94px;font-size:9.4px;letter-spacing:-0.6109399999999994px;line-height:10.08px;color:#2a2a2a">00 00 00 00 00 01 ff 27</div><div class="a m" style="left:291.7px;top:80.94px;font-size:9.4px;letter-spacing:-0.6109399999999994px;line-height:10.08px;color:#2a2a2a"><span style="color:#7a7a7a">·</span><span style="color:#7a7a7a">·</span><span style="color:#7a7a7a">·</span><span style="color:#7a7a7a">·</span><span style="color:#7a7a7a">·</span><span style="color:#7a7a7a">·</span><span style="color:#7a7a7a">·</span><span style="color:#7a7a7a">·</span></div><div class="a m" style="left:337.7px;top:80.94px;font-size:9.4px;letter-spacing:-0.6109399999999994px;line-height:10.08px;color:#2a2a2a"><span style="color:#7a7a7a">·</span><span style="color:#7a7a7a">·</span><span style="color:#7a7a7a">·</span><span style="color:#7a7a7a">·</span><span style="color:#7a7a7a">·</span><span style="color:#7a7a7a">·</span><span style="color:#7a7a7a">·</span>&#x27;</div></div><div class="a" style="left:0;top:494.9px;width:691px;height:9px;background:#ececec"></div><div class="a" style="left:0;top:503.9px;width:693px;height:2.1px;background:#fff"></div><svg class="a" style="left:660px;top:494px" width="33" height="10" viewBox="660 494 33 9.9"><defs><linearGradient id="sb1" x1="0" y1="0" x2="0" y2="1"><stop offset="0" stop-color="#8fd0f4"/><stop offset="1" stop-color="#4f9ee6"/></linearGradient></defs><rect x="668" y="496.9" width="11.7" height="8" fill="url(#sb1)"/><circle cx="673.8" cy="502.6" r="3.9" fill="#fff"/><circle cx="673.8" cy="502.6" r="1.5" fill="#1a5fd0"/><circle cx="691.5" cy="504.5" r="7.4" fill="#92dcf8" stroke="#6aa6e0" stroke-width="0.7"/></svg></div>
</body></html>
